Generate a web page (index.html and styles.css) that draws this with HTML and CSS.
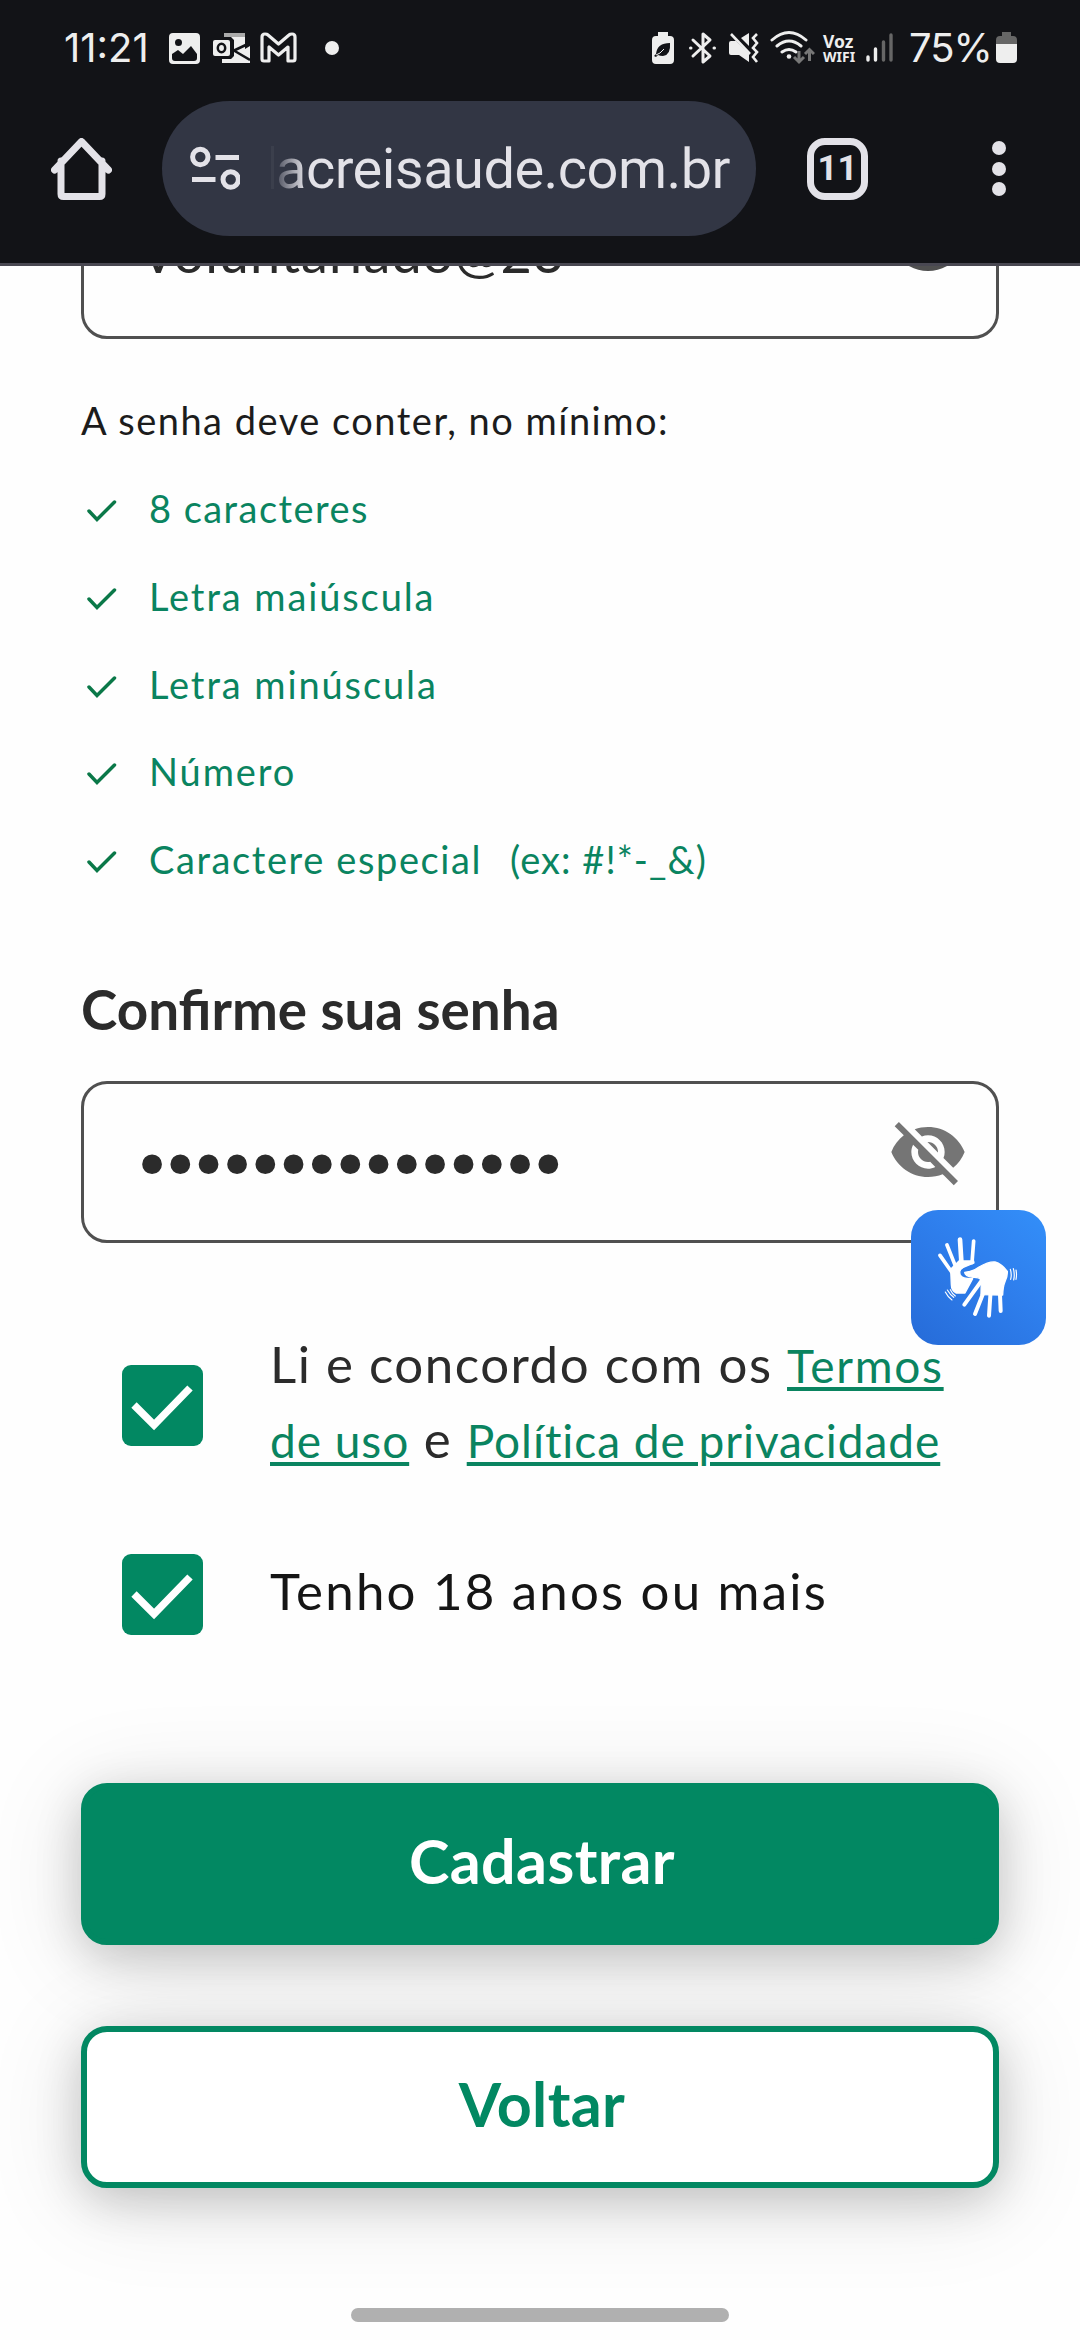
FILE: index.html
```html
<!DOCTYPE html>
<html lang="pt-BR">
<head>
<meta charset="utf-8">
<title>Cadastro</title>
<link rel="stylesheet" href="styles.css">
</head>
<body>
<header class="header">
  <div class="status">
    <span class="clock">11:21</span>
    <svg class="ic-photo" width="31" height="40" viewBox="169 28 31 40"><path fill="#eee" fill-rule="evenodd" d="M173 33h23a4 4 0 0 1 4 4v23a4 4 0 0 1-4 4h-23a4 4 0 0 1-4-4V37a4 4 0 0 1 4-4zm5.500 6a3.500 3.500 0 1 0 0 7 3.500 3.500 0 0 0 0-7zM172 54v4q0 3 3 3h19q3 0 3-3v-4l-6-8-8 8-5-4z"/></svg>
    <svg class="ic-mail" width="38" height="40" viewBox="212 28 38 40"><path fill="#aaa" d="M224 33h21v4h-21z"/><path fill="#eee" d="M224 37h21v12l5-3v17h-28v-4h9l3-3V40l-3-3z"/><path stroke="#121317" stroke-width="2.500" fill="none" d="M233 50l17 10M233 51l17-8"/><rect x="213" y="40" width="17" height="16" rx="2" fill="#eee"/><ellipse cx="221.500" cy="48" rx="3.700" ry="4.300" fill="none" stroke="#121317" stroke-width="2.500"/></svg>
    <svg class="ic-gmail" width="37" height="40" viewBox="260 28 37 40"><path fill="none" stroke="#eee" stroke-width="3.200" stroke-linejoin="round" d="M262 37q0-3 3-3 2 0 3 1l10.500 9L289 35q1-1 3-1 3 0 3 3v22q0 2-2 2h-5V47l-9.500 8-9.500-8v14h-5q-2 0-2-2z"/></svg>
    <i class="status-dot"></i>
    <svg class="ic-saver" width="22" height="40" viewBox="652 28 22 40"><path fill="#eee" d="M658 32h10v4h2a4 4 0 0 1 4 4v20a4 4 0 0 1-4 4h-14a4 4 0 0 1-4-4V40a4 4 0 0 1 4-4h2z"/><path fill="#121317" d="M656 54q1-11 14-11 1 12-7 13-3 0-5-1l-2 2-2-1z"/><path d="M656 55q4-1 8-6" stroke="#eee" fill="none"/></svg>
    <svg class="ic-bt" width="27" height="40" viewBox="689 28 27 40"><path fill="none" stroke="#eee" stroke-width="3" stroke-linejoin="round" stroke-linecap="round" d="M693 40l17 16-7 6V34l7 6-17 16M690.500 48h.500M714 48h.500"/></svg>
    <svg class="ic-mute" width="30" height="40" viewBox="729 28 30 40"><path fill="#eee" d="M729 43q0-2 2-2h5l13 13v8l-10-7h-8q-2 0-2-2zM741 38l8-5v13z"/><path fill="none" stroke="#eee" stroke-width="2.600" d="M731 34l19 20M757 34l-4 4 4 5-4 5 4 4-4 5 4 5"/></svg>
    <svg class="ic-wifi" width="45" height="40" viewBox="770 28 45 40"><path fill="none" stroke="#eee" stroke-width="3" stroke-linecap="round" d="M772 40q17-15 34 0M777 46q12-10 24 0M782 52q7-5 14 0"/><circle cx="789" cy="56.500" r="2.300" fill="#eee"/><path fill="none" stroke="#777" stroke-width="3" d="M799 51v11M794 57l5 5 5-5M809.500 61V50M805 54l4.500-4.500L814 54"/></svg>
    <span class="vowifi"><b>Voz</b><b class="wf">WIFI</b></span>
    <svg class="ic-signal" width="28" height="40" viewBox="865 28 28 40"><path fill="none" stroke="#eee" stroke-width="3.400" stroke-linecap="round" d="M867 57v3M874.500 49v11"/><path fill="none" stroke="#666" stroke-width="3.400" stroke-linecap="round" d="M882.500 42v18M890 35v25"/></svg>
    <span class="percent">75%</span>
    <svg class="ic-batt" width="21" height="40" viewBox="995 28 21 40"><path fill="#666" d="M1001 32h9v4h2a4 4 0 0 1 4 4v4h-21v-4a4 4 0 0 1 4-4h2z"/><path fill="#eee" d="M995 44h21v15a4 4 0 0 1-4 4h-13a4 4 0 0 1-4-4z"/></svg>
  </div>
  <div class="toolbar">
    <svg class="home" width="61" height="62" viewBox="51 138 61 62"><path fill="none" stroke="#e3e2e8" stroke-width="7" stroke-linecap="round" stroke-linejoin="round" d="M61 161v33q0 2.500 2.500 2.500h36q2.500 0 2.500-2.500v-33M54.500 170L81.500 141.500 108.500 170"/></svg>
    <div class="omnibox">
      <svg class="tune" width="50" height="46" viewBox="190 146 50 46"><g fill="none" stroke="#e3e2e8" stroke-width="5"><circle cx="200.300" cy="157" r="7.700"/><circle cx="230.700" cy="179.500" r="7.700"/><path d="M215.500 157.500h23.500M192 179.500h23.500"/></g></svg>
      <i class="cut"></i>
      <span class="url">acreisaude.com.br</span>
    </div>
    <div class="tabs">11</div>
    <div class="more"><i></i><i></i><i></i></div>
  </div>
</header>
<main class="form">
  <div class="field field-top">
    <span class="value">Voluntariado@23</span>
    <svg class="eye" width="80" height="80" viewBox="0 0 24 24"><path fill="#505050" d="M12 4.500C7 4.500 2.730 7.610 1 12c1.730 4.390 6 7.500 11 7.500s9.270-3.110 11-7.500c-1.730-4.390-6-7.500-11-7.500z"/></svg>
  </div>
  <p class="hint">A senha deve conter, no mínimo:</p>
  <ul class="rules">
    <li class="count"><svg class="tick" width="30" height="24" viewBox="0 0 30 24"><path d="M2 11l8 8.500L27.500 2"/></svg><span>8 caracteres</span></li>
    <li><svg class="tick" width="30" height="24" viewBox="0 0 30 24"><path d="M2 11l8 8.500L27.500 2"/></svg><span>Letra maiúscula</span></li>
    <li><svg class="tick" width="30" height="24" viewBox="0 0 30 24"><path d="M2 11l8 8.500L27.500 2"/></svg><span>Letra minúscula</span></li>
    <li><svg class="tick" width="30" height="24" viewBox="0 0 30 24"><path d="M2 11l8 8.500L27.500 2"/></svg><span>Número</span></li>
    <li class="special"><svg class="tick" width="30" height="24" viewBox="0 0 30 24"><path d="M2 11l8 8.500L27.500 2"/></svg><span>Caractere especial</span><span class="example">(ex: #!*-_&amp;)</span></li>
  </ul>
  <h2 class="label">Confirme sua senha</h2>
  <div class="field">
    <span class="mask">•••••••••••••••</span>
    <svg class="eye" width="80" height="80" viewBox="0 0 24 24"><path fill="#757575" d="M12 7c2.760 0 5 2.240 5 5 0 .65-.13 1.260-.36 1.830l2.920 2.920c1.510-1.260 2.700-2.890 3.430-4.750-1.730-4.390-6-7.500-11-7.500-1.400 0-2.740.25-3.980.7l2.160 2.160C10.740 7.130 11.350 7 12 7zM2 4.270l2.280 2.280.46.46C3.080 8.300 1.780 10.020 1 12c1.730 4.390 6 7.500 11 7.500 1.550 0 3.030-.3 4.380-.84l.42.42L19.730 22 21 20.730 3.270 3 2 4.270zM7.530 9.800l1.550 1.550c-.05.21-.08.43-.08.65 0 1.660 1.340 3 3 3 .22 0 .44-.03.65-.08l1.550 1.550c-.67.33-1.410.53-2.200.53-2.760 0-5-2.240-5-5 0-.79.2-1.530.53-2.200zm4.310-.78l3.150 3.150.02-.16c0-1.660-1.340-3-3-3l-.17.01z"/></svg>
  </div>
  <div class="consent">
    <span class="box"><svg width="81" height="81" viewBox="0 0 81 81"><path d="M12 40l20 20 36-37"/></svg></span>
    <p>Li e concordo com os <a class="terms">Termos</a><br><a>de uso</a> e <a>Política de privacidade</a></p>
  </div>
  <div class="consent age">
    <span class="box"><svg width="81" height="81" viewBox="0 0 81 81"><path d="M12 40l20 20 36-37"/></svg></span>
    <p>Tenho 18 anos ou mais</p>
  </div>
  <button class="btn primary">Cadastrar</button>
  <button class="btn outline">Voltar</button>
  <div class="handle"></div>
</main>
<div class="libras">
  <svg width="135" height="135" viewBox="0 0 405 405">
    <g fill="#fff" stroke="#fff" stroke-linecap="round" stroke-linejoin="round">
      <path stroke-width="11" fill="none" d="M87 136l35 50M108 105l28 70M188 93l-5 65"/><path stroke-width="14" fill="none" d="M147 89l5 80"/>
      <path stroke-width="4" d="M119 178l25-25 44 0 1 6-34 14q-13 8-7 22 6 12 37 11l-23 43h-27q-14-8-14-25z"/>
      <path stroke-width="4" d="M161 187q24-2 43-16 30-17 48-15 20 6 37 28 1 14-7 31-6 14-7 40l-65-1 1-45q-8-8-25-7-25-3-25-15z"/>
      <path stroke-width="12" fill="none" d="M160 284l52-72M192 312l27-68M234 317l5-75M269 303l-3-73"/>
    </g>
    <path fill="none" stroke="#fff" stroke-width="3.500" stroke-linecap="round" d="M298 178q5 15 1 30M307 176q5 17 1 34M315 180q3 13 0 28M103 246q8 16 20 24M109 240q9 15 19 22M118 239q6 13 15 19"/>
  </svg>
</div>
</body>
</html>
```
FILE: styles.css
```css
* { box-sizing: border-box; }
body { margin: 0; width: 1080px; height: 2340px; overflow: hidden; position: relative; background: #fefefe; font-family: Lato, "Noto Sans", sans-serif; color: #2b2b2b; }
p, h2, ul { margin: 0; padding: 0; list-style: none; }
i { display: block; }
svg { display: block; flex: none; }

.header { height: 266px; background: #121317; border-bottom: 3px solid #494852; position: relative; z-index: 2; }
.status { height: 74px; padding: 28px 0 0 64px; display: flex; align-items: flex-start; color: #eee; white-space: nowrap; }
.clock, .percent { font: 400 40px/40px Inter, sans-serif; flex: none; }
.clock { width: 105px; }
.ic-mail { margin-left: 12px; }
.ic-gmail { margin-left: 10px; }
.status-dot { width: 14px; height: 14px; border-radius: 50%; background: #eee; margin: 13px 0 0 28px; }
.ic-saver { margin-left: 313px; }
.ic-bt { margin-left: 15px; }
.ic-mute { margin-left: 13px; }
.ic-wifi { margin-left: 11px; }
.vowifi { margin: 5px 0 0 8px; width: 34px; font-family: "Noto Sans", sans-serif; }
.vowifi b { display: block; font-size: 17.500px; line-height: 16px; }
.vowifi .wf { font-size: 14px; line-height: 16px; }
.ic-signal { margin-left: 9px; }
.percent { margin-left: 15px; width: 87px; letter-spacing: -1px; }

.toolbar { height: 189px; display: flex; align-items: center; padding-left: 51px; }
.omnibox { margin-left: 50px; width: 594px; height: 135px; border-radius: 68px; background: #323644; display: flex; align-items: center; padding-left: 28px; overflow: hidden; }
.cut { width: 3px; height: 43px; margin: -3px 2px 0 31px; background: #3b3f4c; }
.url { font: 400 56px/70px Roboto, sans-serif; letter-spacing: -.55px; white-space: nowrap; background: linear-gradient(90deg, #4d505e 0, #e3e2e8 30px); background-clip: text; -webkit-background-clip: text; color: transparent; }
.tabs { margin-left: 51px; width: 61px; height: 62px; border: 7px solid #e3e2e8; border-radius: 18px; font: 700 35px/48px Roboto, sans-serif; color: #e3e2e8; text-align: center; }
.more { margin-left: 124px; display: grid; gap: 6.500px; }
.more i { width: 14px; height: 14px; border-radius: 50%; background: #e3e2e8; }

.form { padding: 0 81px; display: flex; flex-direction: column; }
.field { height: 162px; flex: none; border: 3px solid #505050; border-radius: 26px; display: flex; justify-content: space-between; padding: 28px 28px 0 58px; white-space: nowrap; }
.field-top { margin-top: -89px; }
.field-top .eye { margin-top: -2px; }
.value { font-size: 54px; line-height: 90px; letter-spacing: 1px; margin-left: -2px; }
.mask { font: 68px/108px "DejaVu Sans", sans-serif; letter-spacing: -11.800px; margin-left: -10px; }
.hint { margin-top: 56px; font-size: 38px; line-height: 50px; letter-spacing: 1.500px; color: #1c1c1c; white-space: nowrap; }
.rules { margin-top: 20px; font-size: 38px; letter-spacing: 1.900px; color: #0a8460; }
.rules li { height: 87.750px; line-height: 87.750px; display: flex; padding-left: 6px; white-space: nowrap; }
.rules .count { letter-spacing: 1.450px; }
.rules .special { letter-spacing: 1.600px; }
.rules .example { margin-left: 28px; letter-spacing: 1.050px; }
.tick { margin: 35px 32px 0 0; fill: none; stroke: #0a7848; stroke-width: 3.500; stroke-linecap: round; }
.label { margin-top: 70px; margin-bottom: 37px; font-size: 54.800px; line-height: 70px; font-weight: 700; white-space: nowrap; }
.consent { margin-top: 83px; padding-left: 41px; display: flex; gap: 67px; font-size: 51px; line-height: 75px; letter-spacing: 1.500px; white-space: nowrap; }
.consent p { height: 150px; }
.consent .box { margin-top: 39px; width: 81px; height: 81px; border-radius: 9px; background: #028862; }
.box path { fill: none; stroke: #fff; stroke-width: 7.500; }
.consent a { font-size: 46px; line-height: 1; letter-spacing: .95px; color: #0a8460; text-decoration: underline; text-decoration-thickness: 4px; text-underline-offset: 4px; }
.consent .terms { letter-spacing: 1.700px; }
.consent.age { margin-top: 77px; height: 82px; letter-spacing: 2.200px; color: #151515; }
.consent.age .box { margin-top: 1px; }
.btn { height: 162px; flex: none; border: 6px solid #028862; border-radius: 26px; background: #028862; color: #fff; font: 700 61px/144px Lato, sans-serif; letter-spacing: .4px; padding: 0 0 6px 4px; box-shadow: 0 12px 46px rgba(0, 0, 0, .18), 0 12px 100px rgba(0, 0, 0, .12); }
.primary { margin-top: 148px; }
.outline { margin-top: 81px; background: #fff; color: #028862; }
.handle { width: 378px; height: 14px; border-radius: 7px; background: #b0b0b0; margin: 120px auto 0; }

.libras { position: absolute; left: 911px; top: 1210px; width: 135px; height: 135px; border-radius: 27px; background: linear-gradient(40deg, #266bd8, #2f80ee 60%, #338ff9); }
```
